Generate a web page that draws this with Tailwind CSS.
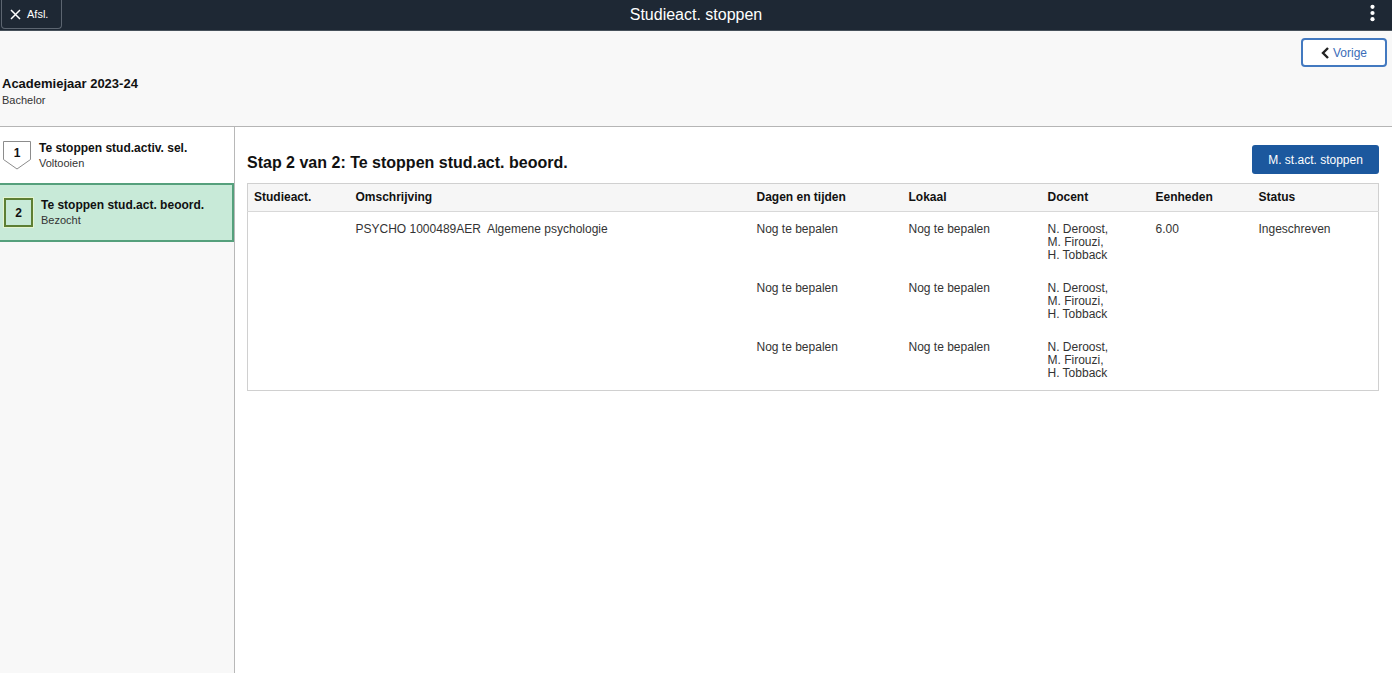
<!DOCTYPE html>
<html lang="nl">
<head>
<meta charset="utf-8">
<meta name="viewport" content="width=device-width, initial-scale=1">
<title>Studieact. stoppen</title>
<script src="https://cdn.jsdelivr.net/npm/@tailwindcss/browser@4"></script>
</head>
<body class="bg-white font-['Liberation_Sans',Arial,sans-serif] text-[#111]">
<div class="mr-2 flex min-h-screen flex-col">
  <header class="grid h-[31px] grid-cols-[1fr_auto_1fr] items-start border-b border-[#46505a] bg-[#1e2834] text-white">
    <button type="button" class="ml-px flex h-[29px] w-[61px] items-center gap-1.5 rounded-b-sm border border-t-0 border-[#5c6570] pl-2 text-[11px]">
      <svg class="size-[11px]" viewBox="0 0 11 11" fill="none" stroke="currentColor" stroke-width="1.5" aria-hidden="true"><path d="M1 1l9 9M10 1l-9 9"/></svg>
      Afsl.
    </button>
    <h1 class="text-base leading-[29px]">Studieact. stoppen</h1>
    <button type="button" aria-label="Acties" class="mr-3 flex h-[26px] w-4 items-center justify-center justify-self-end">
      <svg class="h-[18px] w-[5px]" viewBox="0 0 5 18" fill="currentColor" aria-hidden="true"><circle cx="2.5" cy="2.8" r="2.1"/><circle cx="2.5" cy="9" r="2.1"/><circle cx="2.5" cy="15.2" r="2.1"/></svg>
    </button>
  </header>

  <section class="flex h-24 items-start justify-between border-b border-[#b5b5b5] bg-[#f8f8f8] pt-[7px] pr-[5px] pl-0.5">
    <div class="pt-[38px]">
      <h2 class="text-[13px] leading-4 font-bold">Academiejaar 2023-24</h2>
      <p class="text-[11px] leading-4 text-[#333]">Bachelor</p>
    </div>
    <button type="button" class="flex h-[29px] w-[86px] items-center justify-center gap-1 rounded border-2 border-[#4279c0] bg-white text-xs text-[#3b6cb8]">
      <svg class="h-3 w-2" viewBox="0 0 8 12" fill="none" stroke="#222" stroke-width="2.4" aria-hidden="true"><path d="M7 1L2 6l5 5"/></svg>
      Vorige
    </button>
  </section>

  <div class="flex flex-1">
    <nav aria-label="Stappen" class="w-[235px] shrink-0 border-r border-[#b8b8b8] bg-[#f8f8f8]">
      <ol>
        <li>
          <a href="#stap1" class="flex h-14 items-start gap-2 bg-white pt-3 pl-[3px]">
            <svg class="mt-0.5 h-[29px] w-7" viewBox="0 0 28 29" aria-hidden="true"><path d="M.5 .5h27v18L14 28 .5 18.500z" fill="#fff" stroke="#8c8c8c"/><text x="14" y="16" text-anchor="middle" font-size="12" font-weight="700" fill="#111">1</text></svg>
            <span class="flex flex-col pt-0.5">
              <span class="text-xs leading-[15px] font-bold">Te stoppen stud.activ. sel.</span>
              <span class="text-[11px] leading-[15px] text-[#333]">Voltooien</span>
            </span>
          </a>
        </li>
        <li>
          <a href="#stap2" aria-current="step" class="flex h-[59px] items-center gap-2 border-2 border-l-0 border-[#55a07c] bg-[#c8ead8] pl-1">
            <span class="flex size-[29px] items-center justify-center border-2 border-[#5d7f34] text-xs font-bold outline outline-[#e4f5cf]">2</span>
            <span class="flex flex-col">
              <span class="text-xs leading-[15px] font-bold">Te stoppen stud.act. beoord.</span>
              <span class="text-[11px] leading-[15px] text-[#333]">Bezocht</span>
            </span>
          </a>
        </li>
      </ol>
    </nav>

    <main class="min-w-0 flex-1 pt-[18px] pr-[13px] pl-3">
      <div class="mb-2 flex h-[30px] items-end justify-between">
        <h2 class="text-base leading-6 font-bold">Stap 2 van 2: Te stoppen stud.act. beoord.</h2>
        <button type="button" class="mb-px h-[29px] w-[127px] rounded-[3px] bg-[#1c589e] text-xs text-white">M. st.act. stoppen</button>
      </div>
      <table class="w-full table-fixed border border-[#d0d0d0] text-left text-xs text-[#333]">
        <colgroup><col class="w-[102px]"><col class="w-[401px]"><col class="w-[152px]"><col class="w-[139px]"><col class="w-[108px]"><col class="w-[103px]"><col></colgroup>
        <thead class="bg-[#f6f6f6] text-[#111]">
          <tr class="h-7 border-b border-[#d8d8d8]">
            <th scope="col" class="pb-0.5 pl-1.5">Studieact.</th>
            <th scope="col" class="pb-0.5 pl-1.5">Omschrijving</th>
            <th scope="col" class="pb-0.5 pl-1.5">Dagen en tijden</th>
            <th scope="col" class="pb-0.5 pl-1.5">Lokaal</th>
            <th scope="col" class="pb-0.5 pl-1.5">Docent</th>
            <th scope="col" class="pb-0.5 pl-1.5">Eenheden</th>
            <th scope="col" class="pb-0.5 pl-1.5">Status</th>
          </tr>
        </thead>
        <tbody class="align-top leading-[13px]">
          <tr class="h-[59px]">
            <td></td>
            <td class="pt-[11px] pl-1.5">PSYCHO 1000489AER&nbsp; Algemene psychologie</td>
            <td class="pt-[11px] pl-1.5">Nog te bepalen</td>
            <td class="pt-[11px] pl-1.5">Nog te bepalen</td>
            <td class="pt-[11px] pl-1.5">N. Deroost,<br>M. Firouzi,<br>H. Tobback</td>
            <td class="pt-[11px] pl-1.5">6.00</td>
            <td class="pt-[11px] pl-1.5">Ingeschreven</td>
          </tr>
          <tr class="h-[59px]">
            <td></td><td></td>
            <td class="pt-[11px] pl-1.5">Nog te bepalen</td>
            <td class="pt-[11px] pl-1.5">Nog te bepalen</td>
            <td class="pt-[11px] pl-1.5">N. Deroost,<br>M. Firouzi,<br>H. Tobback</td>
            <td></td><td></td>
          </tr>
          <tr class="h-[61px]">
            <td></td><td></td>
            <td class="pt-[11px] pl-1.5">Nog te bepalen</td>
            <td class="pt-[11px] pl-1.5">Nog te bepalen</td>
            <td class="pt-[11px] pl-1.5">N. Deroost,<br>M. Firouzi,<br>H. Tobback</td>
            <td></td><td></td>
          </tr>
        </tbody>
      </table>
    </main>
  </div>
</div>
</body>
</html>
